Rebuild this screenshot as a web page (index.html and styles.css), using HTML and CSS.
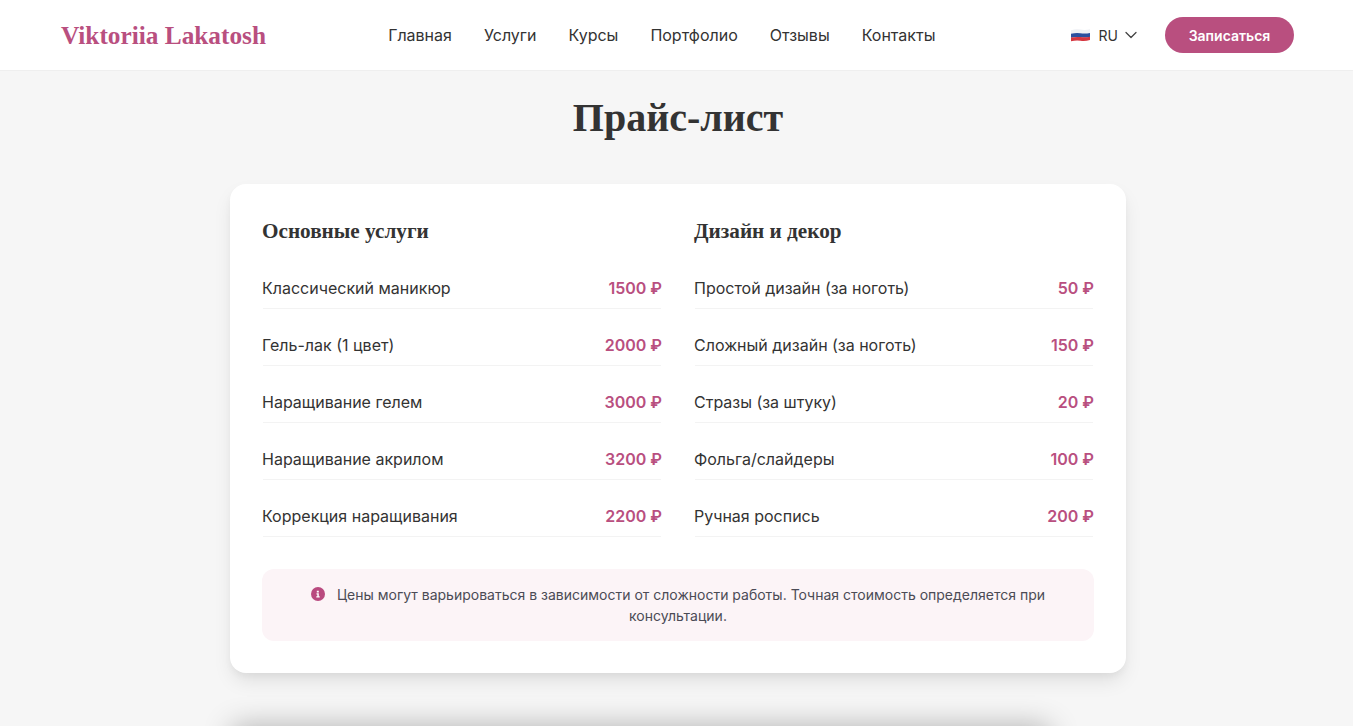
FILE: index.html
```html
<!DOCTYPE html>
<html lang="ru">
<head>
<meta charset="utf-8">
<title>Viktoriia Lakatosh</title>
<link rel="stylesheet" href="styles.css">
</head>
<body>
<header class="header">
  <a class="logo" href="#">Viktoriia Lakatosh</a>
  <nav class="nav">
    <a href="#">Главная</a>
    <a href="#">Услуги</a>
    <a href="#">Курсы</a>
    <a href="#">Портфолио</a>
    <a href="#">Отзывы</a>
    <a href="#">Контакты</a>
  </nav>
  <div class="actions">
    <div class="lang">
      <svg class="flag" width="19" height="14" viewBox="0 0 19 14" aria-hidden="true">
        <path d="M0 2.2Q5 .6 9.500 1.600T19 1.200V5.200Q14 6.200 9.500 5.400T0 6Z" fill="#eef0f4"/>
        <path d="M0 5.800Q5 4.600 9.500 5.300T19 5V9Q14 10 9.500 9.200T0 9.800Z" fill="#2b4f9e"/>
        <path d="M0 9.600Q5 8.500 9.500 9.100T19 8.800V12Q14 13.400 9.500 12.700T0 13.200Z" fill="#d5353f"/>
      </svg>
      <span class="lang-code">RU</span>
      <svg class="chevron" width="12" height="8" viewBox="0 0 12 8" aria-hidden="true"><path d="M1 1.500l5 5 5-5" fill="none" stroke="#444" stroke-width="1.300" stroke-linecap="round" stroke-linejoin="round"/></svg>
    </div>
    <a class="cta" href="#">Записаться</a>
  </div>
</header>
<main class="main">
  <h1 class="title">Прайс-лист</h1>
  <section class="card">
    <div class="columns">
      <div class="column">
        <h2 class="column-title">Основные услуги</h2>
        <div class="row"><span>Классический маникюр</span><b class="price">1500 ₽</b></div>
        <div class="row"><span>Гель-лак (1 цвет)</span><b class="price">2000 ₽</b></div>
        <div class="row"><span>Наращивание гелем</span><b class="price">3000 ₽</b></div>
        <div class="row"><span>Наращивание акрилом</span><b class="price">3200 ₽</b></div>
        <div class="row"><span>Коррекция наращивания</span><b class="price">2200 ₽</b></div>
      </div>
      <div class="column">
        <h2 class="column-title">Дизайн и декор</h2>
        <div class="row"><span>Простой дизайн (за ноготь)</span><b class="price">50 ₽</b></div>
        <div class="row"><span>Сложный дизайн (за ноготь)</span><b class="price">150 ₽</b></div>
        <div class="row"><span>Стразы (за штуку)</span><b class="price">20 ₽</b></div>
        <div class="row"><span>Фольга/слайдеры</span><b class="price">100 ₽</b></div>
        <div class="row"><span>Ручная роспись</span><b class="price">200 ₽</b></div>
      </div>
    </div>
    <p class="note">
      <svg class="info" width="14" height="14" viewBox="0 0 14 14" aria-hidden="true"><circle cx="7" cy="7" r="7" fill="#b94a7f"/><path d="M5.800 3.800h2v1.600h-2zM5.500 6.300h2.300v3h.9v1.200H5.300V9.300h1V7.500h-.8z" fill="#fff"/></svg>Цены могут варьироваться в зависимости от сложности работы. Точная стоимость определяется при консультации.
    </p>
  </section>
  <div class="next-card"></div>
</main>
</body>
</html>
```
FILE: styles.css
```css
* { box-sizing: border-box; }
html, body { height: 100%; overflow: hidden; }
body {
  margin: 0;
  background: #f6f6f6;
  color: #333;
  font-family: Inter, "Noto Sans", sans-serif;
  font-size: 16px;
}
a { color: inherit; text-decoration: none; }
.header {
  height: 71px;
  padding: 0 59px 0 61px;
  display: flex;
  align-items: center;
  justify-content: space-between;
  background: #fff;
  border-bottom: 1px solid #efefef;
}
.logo {
  width: 205px;
  white-space: nowrap;
  font-family: "Liberation Serif", serif;
  font-size: 25.3px;
  font-weight: 700;
  color: #b94f7f;
}
.nav {
  display: flex;
  gap: 32px;
  margin-left: -13px;
  font-size: 16px;
  color: #333;
}
.actions { display: flex; align-items: center; gap: 28px; }
.lang { display: flex; align-items: center; font-size: 14px; }
.flag { margin-right: 9px; }
.lang-code { margin-right: 7px; }
.cta {
  width: 129px;
  height: 36px;
  display: flex;
  align-items: center;
  justify-content: center;
  border-radius: 18px;
  background: #b94f7f;
  color: #fff;
  font-size: 14px;
  font-weight: 600;
}
.main { display: flex; flex-direction: column; align-items: center; padding-left: 3px; }
.title {
  margin: 21px 0 41px;
  font-family: "Liberation Serif", serif;
  font-size: 40px;
  line-height: 51px;
  font-weight: 700;
  color: #333;
}
.card {
  width: 896px;
  padding: 32px;
  background: #fff;
  border-radius: 16px;
  box-shadow: 0 10px 20px -3px rgba(0,0,0,.1), 0 4px 8px -2px rgba(0,0,0,.05);
}
.columns { display: grid; grid-template-columns: 1fr 1fr; gap: 32px; }
.column-title {
  margin: 0 0 30px;
  font-family: "Liberation Serif", serif;
  font-size: 21.2px;
  line-height: 30px;
  font-weight: 700;
  color: #333;
}
.row {
  height: 33px;
  margin-bottom: 24px;
  padding-bottom: 8px;
  display: flex;
  justify-content: space-between;
  line-height: 24px;
  position: relative;
  color: #333;
}
.row:last-child { margin-bottom: 0; }
.row::after {
  content: "";
  position: absolute;
  left: 1px; right: 1px; bottom: 0;
  height: 1px;
  background: #f3f3f3;
}
.price { color: #b94f7f; font-weight: 600; }
.note {
  margin: 32px 0 0;
  padding: 15px 48px;
  background: #fcf4f7;
  border-radius: 12px;
  text-align: center;
  font-size: 14px;
  line-height: 21px;
  color: #4b4b55;
}
.info { vertical-align: -1px; margin-right: 12px; }
.next-card {
  width: 800px;
  height: 300px;
  margin-top: 62px;
  margin-right: 75px;
  background: #fff;
  box-shadow: 0 0 28px 8px rgba(0,0,0,.3);
}
```
